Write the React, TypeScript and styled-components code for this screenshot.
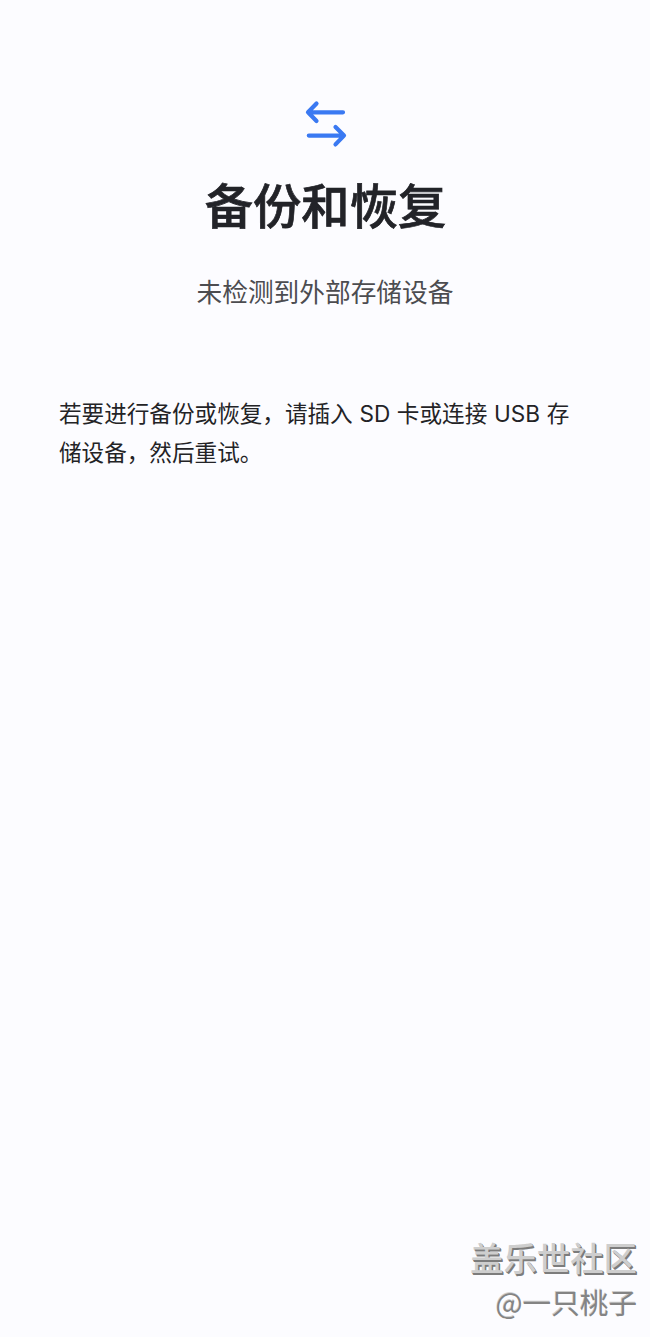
import React from 'react';
import styled, { createGlobalStyle } from 'styled-components';

const GlobalStyle = createGlobalStyle`
  body {
    margin: 0;
    background: #fcfcff;
    font-family: 'Noto Sans CJK SC', sans-serif;
  }
`;

const Screen = styled.div`
  box-sizing: border-box;
  height: 1337px;
  display: flex;
  flex-direction: column;
  padding: 98px 0 15px;
  overflow: hidden;
`;

const Header = styled.header`
  display: flex;
  flex-direction: column;
  align-items: center;
`;

const TransferIcon = styled.svg`
  width: 52px;
  height: 52px;
  fill: none;
  stroke: #3a79f2;
  stroke-width: 4.2;
  stroke-linecap: round;
  stroke-linejoin: round;
`;

const Title = styled.h1`
  margin: 17px 0 0;
  padding-left: 1px;
  font-size: 48.3px;
  line-height: 72px;
  font-weight: 500;
  -webkit-text-stroke: 0.7px #222328;
  color: #222328;
`;

const Subtitle = styled.p`
  margin: 32px 0 0;
  font-size: 25.7px;
  line-height: 40px;
  font-weight: 400;
  color: #4c4c50;
`;

const Message = styled.p`
  margin: 82px 59px 0;
  font-size: 22.6px;
  line-height: 39px;
  word-spacing: 1.6px;
  white-space: nowrap;
  color: #232326;
`;

const Latin = styled.span`
  font-family: Inter, sans-serif;
  font-size: 22.6px;
  line-height: 0;
`;

const Watermark = styled.footer`
  display: flex;
  flex-direction: column;
  align-items: flex-end;
  margin-top: auto;
  padding-right: 13px;
`;

const Community = styled.span`
  margin-bottom: 1px;
  font-size: 33.4px;
  line-height: 48px;
  font-weight: 500;
  color: #cecece;
  text-shadow: 1px 1px 0 #7c7c7c, 1.5px 1.5px 0 #7c7c7c;
`;

const Author = styled.span`
  font-size: 28.6px;
  line-height: 40px;
  color: #848484;
  text-shadow: -0.6px -0.6px 0 #cccccc;
`;

export default function App() {
  return (
    <>
      <GlobalStyle />
      <Screen>
        <Header>
          <TransferIcon viewBox="299 98 52 52">
            <path d="M343 112.3H308.5M316.5 103.5L308 112.3L316.5 121" />
            <path d="M308.8 135.6H344M335.5 127L344 135.6L335.5 144.4" />
          </TransferIcon>
          <Title>备份和恢复</Title>
          <Subtitle>未检测到外部存储设备</Subtitle>
        </Header>
        <Message>
          若要进行备份或恢复，请插入 <Latin>SD</Latin> 卡或连接 <Latin>USB</Latin> 存
          <br />
          储设备，然后重试。
        </Message>
        <Watermark>
          <Community>盖乐世社区</Community>
          <Author>@一只桃子</Author>
        </Watermark>
      </Screen>
    </>
  );
}
